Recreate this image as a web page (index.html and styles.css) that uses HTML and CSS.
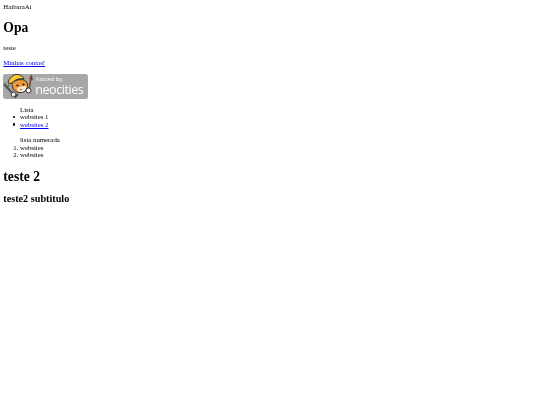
FILE: index.html
```html
<!DOCTYPE html>
<html lang="pt">
<head>
<meta charset="utf-8">
<title>HaibaraAi</title>
<link rel="stylesheet" href="styles.css">
</head>
<body>
<div class="brand">HaibaraAi</div>
<h1>Opa</h1>
<p>teste</p>
<p><a href="#">Minhas contas!</a></p>
<a class="badge" href="#">
<svg class="cat" viewBox="0 0 32 25" aria-hidden="true">
<path d="M2 11l8 9" stroke="#555" stroke-width="2" fill="none"/>
<path d="M.5 12l2-3M3 14l3-3" stroke="#555" stroke-width="1.300" fill="none"/>
<path d="M12 24c1-2 2-3 3-4" stroke="#333" stroke-width="1.200" fill="none"/>
<circle cx="10.500" cy="20.500" r="2.200" fill="#fff" stroke="#222" stroke-width=".8"/>
<path d="M9 9c3-3 8-4 12-3 2 1 4 3 3.500 6-.5 3-2 6-6 6.500-4 .5-7-1-8.500-4-.7-2-1.500-3.500-1-5.500z" fill="#ee9a3c" stroke="#222" stroke-width=".9"/>
<path d="M14 14c2-1 6-2 9.500-2 0 3-2 5.500-5 6-3 .5-4.500-2-4.500-4z" fill="#fbeedd"/>
<path d="M5 9C6 4 10 0 15 .5c3 .3 5 2 6 4.500-5-1-9 .5-12 4-1 .5-3 .5-4 0z" fill="#f6c935" stroke="#222" stroke-width=".9"/>
<circle cx="14.500" cy="11.500" r="1.100" fill="#222"/>
<circle cx="20.500" cy="10.500" r="1.100" fill="#222"/>
<path d="M16.500 15l1.500 1 1.500-1.200" stroke="#222" stroke-width=".6" fill="none"/>
<path d="M27.800 5l-1.500 9" stroke="#7a4a2a" stroke-width="1.600"/>
<path d="M28.500 1l1 4.500-3-.8z" fill="#c8342c" stroke="#222" stroke-width=".5"/>
<circle cx="25.500" cy="16.500" r="2.500" fill="#fff" stroke="#222" stroke-width=".9"/>
</svg>
<span class="badge-text"><span class="hosted">hosted by,</span><span class="neo">neocities</span></span>
</a>
<ul>
<span>Lista</span>
<li>websites 1</li>
<li><a href="#">websites 2</a></li>
</ul>
<ol>
<span>lista numerada</span>
<li>websites</li>
<li>websites</li>
</ol>
<h1 class="second">teste 2</h1>
<h2>teste2 subtitulo</h2>
</body>
</html>
```
FILE: styles.css
```css
html { background: #fff; }
body { margin: 3.33px; font-family: "Liberation Serif", "Times New Roman", serif; font-size: 6.8px; line-height: 7.5px; color: #000; filter: blur(0.2px); }
h1 { font-size: 13.6px; line-height: 15.4px; margin: 8.93px 0; }
.second { margin-top: 10px; }
h2 { font-size: 10.2px; line-height: 11.5px; margin: 8.3px 0; }
p { margin: 7px 0; }
a { color: #00e; }
ul, ol { margin: 7px 0; padding-left: 16.67px; }
ul { list-style: none; margin-bottom: 8px; }
ul li::before { content: ""; display: inline-block; width: 2.300px; height: 2.300px; margin-left: -7px; margin-right: 4.700px; border-radius: 50%; background: #000; vertical-align: 1px; }
ul span, ol span { display: block; }
.badge { display: flex; align-items: center; width: 85px; height: 25px; margin-top: 7.500px; margin-bottom: 5.500px; background: #a8a8a8; border-radius: 2.500px; overflow: hidden; text-decoration: none; color: #fff; }
.cat { width: 32px; height: 25px; flex: none; }
.badge-text { display: flex; flex-direction: column; padding-top: 1.500px; font-family: "Open Sans", sans-serif; }
.hosted { font-size: 5.600px; line-height: 7px; margin-left: 1px; }
.neo { font-size: 12.500px; line-height: 14px; letter-spacing: -.45px; }
```
